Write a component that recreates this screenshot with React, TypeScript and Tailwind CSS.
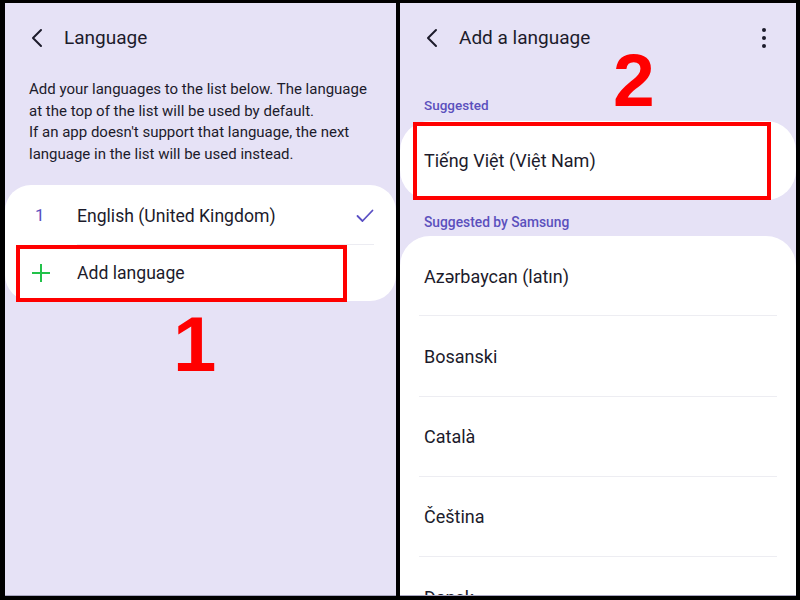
import React from 'react';

const font = { fontFamily: 'Roboto, "Noto Sans", sans-serif' };

const languages = ['Azərbaycan (latın)', 'Bosanski', 'Català', 'Čeština', 'Dansk'];

function Back() {
  return (
    <svg width="14" height="20" viewBox="0 0 14 20" fill="none">
      <path d="M11 2L3 10L11 18" stroke="#1c1b2b" strokeWidth="2" strokeLinecap="round" strokeLinejoin="round" />
    </svg>
  );
}

export default function App() {
  return (
    <div className="flex h-[600px] w-[800px] gap-[4px] bg-black pt-[3px] pr-[4px] pb-[4px] pl-[5px]" style={font}>
      {/* left screen */}
      <div className="relative w-[391px] overflow-hidden border-b border-[#a8a5bf] bg-[#e6e2f6]">
        <div className="flex h-[68px] items-center pt-[2px] pl-[25px]">
          <Back />
          <span className="ml-[20px] text-[19px] text-[#1c1b2b]">Language</span>
        </div>
        <p className="mt-[8px] pr-[20px] pl-[24px] text-[15px] leading-[21.5px] text-[#1c1b2b]">
          Add your languages to the list below. The language at the top of the list will be used by default.
          <br />
          If an app doesn't support that language, the next language in the list will be used instead.
        </p>
        <div className="mt-[20px] rounded-[26px] bg-white">
          <div className="flex h-[59px] items-center pt-[3px] pr-[22px] pl-[30px]">
            <span className="w-[42px] text-[17px] text-[#5a4fbf]">1</span>
            <span className="flex-1 text-[17.6px] text-[#1c1b2b]">English (United Kingdom)</span>
            <svg width="18" height="14" viewBox="0 0 18 14" fill="none">
              <path d="M1.5 7L6.5 12L16.5 1.5" stroke="#5a4fc4" strokeWidth="1.8" strokeLinecap="round" strokeLinejoin="round" />
            </svg>
          </div>
          <div className="ml-[72px] mr-[22px] h-px bg-[#ececf2]" />
          <div className="flex h-[56px] items-center pl-[26px]">
            <svg width="20" height="20" viewBox="0 0 20 20" className="mr-[26px]">
              <path d="M10 1V19M1 10H19" stroke="#22c24a" strokeWidth="2" />
            </svg>
            <span className="text-[17.6px] text-[#1c1b2b]">Add language</span>
          </div>
        </div>
        {/* annotations */}
        <div className="absolute top-[242px] left-[11px] h-[57px] w-[331px] border-[4px] border-[#ff0000]" />
        <div
          className="absolute top-[302px] left-[168px] text-[78px] leading-none font-bold text-[#ff0000]"
          style={{ fontFamily: '"Liberation Sans", Arial, sans-serif' }}
        >
          1
        </div>
      </div>

      {/* right screen */}
      <div className="relative flex-1 overflow-hidden border-b border-[#a8a5bf] bg-[#e6e2f6]">
        <div className="flex h-[68px] items-center pt-[2px] pr-[30px] pl-[25px]">
          <Back />
          <span className="ml-[20px] flex-1 text-[19px] text-[#1c1b2b]">Add a language</span>
          <div className="flex flex-col gap-[3.5px]">
            <span className="h-[4.5px] w-[4.5px] rounded-full bg-[#1c1b2b]" />
            <span className="h-[4.5px] w-[4.5px] rounded-full bg-[#1c1b2b]" />
            <span className="h-[4.5px] w-[4.5px] rounded-full bg-[#1c1b2b]" />
          </div>
        </div>
        <div className="mt-[24px] pl-[24px] text-[13.5px] font-medium text-[#5b50bd]">Suggested</div>
        <div className="mt-[6px] flex h-[79px] items-center rounded-[30px] bg-white pl-[24px] text-[18px] text-[#1c1b2b]">
          Tiếng Việt (Việt Nam)
        </div>
        <div className="mt-[12px] pl-[24px] text-[13.8px] font-medium text-[#5b50bd]">Suggested by Samsung</div>
        <div className="mt-[3px] rounded-t-[30px] bg-white">
          {languages.map((l, i) => (
            <div key={l}>
              {i > 0 && <div className="mx-[19px] h-px bg-[#ededf2]" />}
              <div className="flex h-[79.3px] items-center pt-[1px] pl-[24px] text-[18px] text-[#1c1b2b]">{l}</div>
            </div>
          ))}
        </div>
        {/* annotations */}
        <div className="absolute top-[119px] left-[13px] h-[78px] w-[358px] border-[4px] border-[#ff0000]" />
        <div
          className="absolute top-[40px] left-[213px] text-[75px] leading-none font-bold text-[#ff0000]"
          style={{ fontFamily: '"Liberation Sans", Arial, sans-serif' }}
        >
          2
        </div>
      </div>
    </div>
  );
}
